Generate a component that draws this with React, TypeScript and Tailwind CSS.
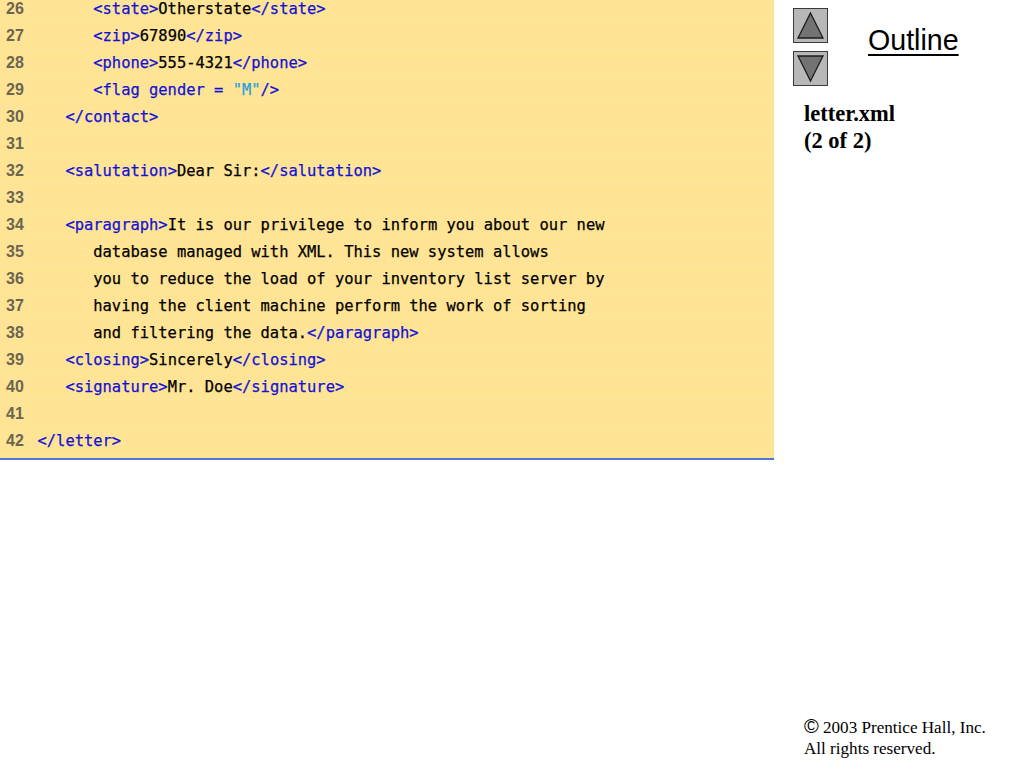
const tag = 'text-[#1212d6]'

type Seg = { t: string; c?: string }

function x(t: string): Seg {
  return { t, c: tag }
}

const lines: { n: number; indent: number; segs: Seg[] }[] = [
  { n: 26, indent: 6, segs: [x('<state>'), { t: 'Otherstate' }, x('</state>')] },
  { n: 27, indent: 6, segs: [x('<zip>'), { t: '67890' }, x('</zip>')] },
  { n: 28, indent: 6, segs: [x('<phone>'), { t: '555-4321' }, x('</phone>')] },
  { n: 29, indent: 6, segs: [x('<flag gender = '), { t: '"M"', c: 'text-[#2c9fd8]' }, x('/>')] },
  { n: 30, indent: 3, segs: [x('</contact>')] },
  { n: 31, indent: 0, segs: [] },
  { n: 32, indent: 3, segs: [x('<salutation>'), { t: 'Dear Sir:' }, x('</salutation>')] },
  { n: 33, indent: 0, segs: [] },
  { n: 34, indent: 3, segs: [x('<paragraph>'), { t: 'It is our privilege to inform you about our new' }] },
  { n: 35, indent: 6, segs: [{ t: 'database managed with XML. This new system allows' }] },
  { n: 36, indent: 6, segs: [{ t: 'you to reduce the load of your inventory list server by' }] },
  { n: 37, indent: 6, segs: [{ t: 'having the client machine perform the work of sorting' }] },
  { n: 38, indent: 6, segs: [{ t: 'and filtering the data.' }, x('</paragraph>')] },
  { n: 39, indent: 3, segs: [x('<closing>'), { t: 'Sincerely' }, x('</closing>')] },
  { n: 40, indent: 3, segs: [x('<signature>'), { t: 'Mr. Doe' }, x('</signature>')] },
  { n: 41, indent: 0, segs: [] },
  { n: 42, indent: 0, segs: [x('</letter>')] },
]

function ArrowButton({ up }: { up?: boolean }) {
  return (
    <div className="w-[35px] h-[35px] bg-[#b8b8b8] border border-[#3a3a3a]">
      <svg viewBox="0 0 33 33" className="w-full h-full">
        <polygon
          points={up ? '16.5,4 29,29 4,29' : '16.5,29 29,4 4,4'}
          fill="#737373"
          stroke="#1c1c1c"
          strokeWidth="1.3"
        />
      </svg>
    </div>
  )
}

export default function App() {
  return (
    <div className="flex w-[1024px] h-[768px] overflow-hidden bg-white">
      <div className="w-[774px] h-[460px] overflow-hidden bg-[#ffe496] border-b-2 border-[#4f77d9]">
        <div className="-mt-[5px]">
          {lines.map((line) => (
            <div key={line.n} className="flex items-center h-[27px] border-b border-[#ffe69e]">
              <span className="w-[37.5px] pl-[6px] mt-[1px] shrink-0 font-['Liberation_Sans',sans-serif] font-bold text-[16px] text-[#6b6650]">
                {line.n}
              </span>
              <span
                className="mt-[3px] font-['DejaVu_Sans_Mono',monospace] text-[15.45px] whitespace-pre text-black [-webkit-text-stroke:0.25px]"
              >
                {' '.repeat(line.indent)}
                {line.segs.map((s, i) => (
                  <span key={i} className={s.c}>
                    {s.t}
                  </span>
                ))}
              </span>
            </div>
          ))}
        </div>
      </div>

      <div className="flex-1 flex flex-col pl-[19px] pt-[8px] pb-[9px]">
        <div className="flex">
          <div className="flex flex-col gap-[8px]">
            <ArrowButton up />
            <ArrowButton />
          </div>
          <div className="ml-[40px] mt-[14px] font-['Liberation_Sans',sans-serif] text-[28.6px] leading-[36px] text-black underline decoration-2 underline-offset-[4px]">
            Outline
          </div>
        </div>
        <div className="ml-[11px] mt-[14px] font-['Liberation_Serif',serif] font-bold text-[22.5px] leading-[27px] text-black">
          <div>letter.xml</div>
          <div>(2 of 2)</div>
        </div>
        <div className="ml-[11px] mt-auto font-['Liberation_Serif',serif] text-[17.1px] leading-[21px] text-black whitespace-nowrap">
          <div>
            <span className="font-['Liberation_Sans',sans-serif] text-[20px] leading-[21px]">©</span> 2003 Prentice Hall, Inc.
          </div>
          <div>All rights reserved.</div>
        </div>
      </div>
    </div>
  )
}
